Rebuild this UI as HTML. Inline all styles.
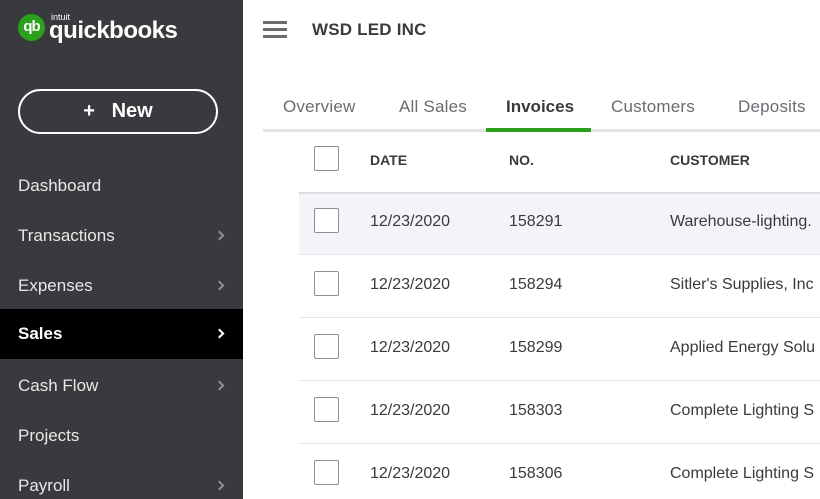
<!DOCTYPE html>
<html><head><style>
*{margin:0;padding:0;box-sizing:border-box}
html,body{width:820px;height:499px;overflow:hidden}
body{background:#fff;font-family:"Liberation Sans",sans-serif;position:relative}
.wrap{position:absolute;left:0;top:0;width:820px;height:499px;overflow:hidden}
.sb{position:absolute;left:0;top:0;width:243px;height:499px;background:#393a3d}
.logo{position:absolute;left:18px;top:14px;width:27px;height:27px;border-radius:50%;background:#2ca01c;color:#fff;font-weight:bold;font-size:15px;text-align:center;line-height:26px;letter-spacing:-1px}
.intuit{position:absolute;left:51px;top:12px;color:#fff;font-size:9px}
.qb{position:absolute;left:49px;top:17px;color:#fff;font-size:24px;font-weight:bold;letter-spacing:-0.5px}
.new{position:absolute;left:18px;top:89px;width:200px;height:45px;border:2px solid #fff;border-radius:23px;color:#fff;font-size:20px;font-weight:bold;text-align:center;line-height:41px}
.nav{position:absolute;left:0;width:243px;height:50px;color:#e8e8e8;font-size:17px;padding-left:18px;line-height:50px}
.nav.a{background:#000;color:#fff;font-weight:bold}
.ch{position:absolute;right:20px;top:21px;width:7px;height:7px;border-right:2px solid #8d9096;border-top:2px solid #8d9096;transform:rotate(45deg)}
.a .ch{border-color:#fff}
.hm{position:absolute;left:263px;width:24px;height:3px;background:#6b6c72}
.tt{position:absolute;left:312px;top:20px;font-size:17px;color:#393a3d;font-weight:bold;letter-spacing:0.2px}
.tab{position:absolute;top:97px;font-size:17px;color:#6b6c72;letter-spacing:0.2px}
.t{position:absolute;font-size:16px;color:#393a3d;white-space:nowrap}
.h{position:absolute;top:152px;font-size:14px;font-weight:bold;color:#393a3d}
.cb{position:absolute;left:314px;width:25px;height:25px;border:1px solid #8d9096;border-radius:2px;background:#fff}
.line{position:absolute;left:299px;right:0;height:1px;background:#e3e5e8}
</style></head><body><div class="wrap">
<div class="sb">
<div class="logo">qb</div><div class="intuit">intuit</div><div class="qb">quickbooks</div>
<div class="new">+&nbsp;&nbsp; New</div>
<div class="nav" style="top:161px">Dashboard</div>
<div class="nav" style="top:211px">Transactions<span class="ch"></span></div>
<div class="nav" style="top:261px">Expenses<span class="ch"></span></div>
<div class="nav a" style="top:309px">Sales<span class="ch"></span></div>
<div class="nav" style="top:361px">Cash Flow<span class="ch"></span></div>
<div class="nav" style="top:411px">Projects</div>
<div class="nav" style="top:461px">Payroll<span class="ch"></span></div>
</div>
<div class="hm" style="top:21px"></div><div class="hm" style="top:28px"></div><div class="hm" style="top:35px"></div>
<div class="tt">WSD LED INC</div>
<div class="tab" style="left:283px">Overview</div>
<div class="tab" style="left:399px">All Sales</div>
<div class="tab" style="left:506px;color:#393a3d;font-weight:bold;letter-spacing:0">Invoices</div>
<div class="tab" style="left:611px">Customers</div>
<div class="tab" style="left:738px">Deposits</div>
<div style="position:absolute;left:263px;top:129px;right:0;height:3px;background:#e3e5e8"></div>
<div style="position:absolute;left:486px;top:128px;width:105px;height:4px;background:#2ca01c"></div>
<div class="cb" style="top:146px"></div>
<div class="h" style="left:370px">DATE</div><div class="h" style="left:509px">NO.</div><div class="h" style="left:670px">CUSTOMER</div>
<div style="position:absolute;left:299px;top:192px;right:0;height:2px;background:#dcdde0"></div>
<div style="position:absolute;left:299px;top:194px;right:0;height:60px;background:#f3f4f7"></div>
<div class="line" style="top:254px"></div><div class="line" style="top:317px"></div><div class="line" style="top:380px"></div><div class="line" style="top:443px"></div>
<div class="cb" style="top:208px"></div><div class="t" style="left:370px;top:213px">12/23/2020</div><div class="t" style="left:509px;top:213px">158291</div><div class="t" style="left:670px;top:213px">Warehouse-lighting.</div>
<div class="cb" style="top:271px"></div><div class="t" style="left:370px;top:276px">12/23/2020</div><div class="t" style="left:509px;top:276px">158294</div><div class="t" style="left:670px;top:276px">Sitler's Supplies, Inc</div>
<div class="cb" style="top:334px"></div><div class="t" style="left:370px;top:339px">12/23/2020</div><div class="t" style="left:509px;top:339px">158299</div><div class="t" style="left:670px;top:339px">Applied Energy Solu</div>
<div class="cb" style="top:397px"></div><div class="t" style="left:370px;top:402px">12/23/2020</div><div class="t" style="left:509px;top:402px">158303</div><div class="t" style="left:670px;top:402px">Complete Lighting S</div>
<div class="cb" style="top:460px"></div><div class="t" style="left:370px;top:465px">12/23/2020</div><div class="t" style="left:509px;top:465px">158306</div><div class="t" style="left:670px;top:465px">Complete Lighting S</div>
</div></body></html>
